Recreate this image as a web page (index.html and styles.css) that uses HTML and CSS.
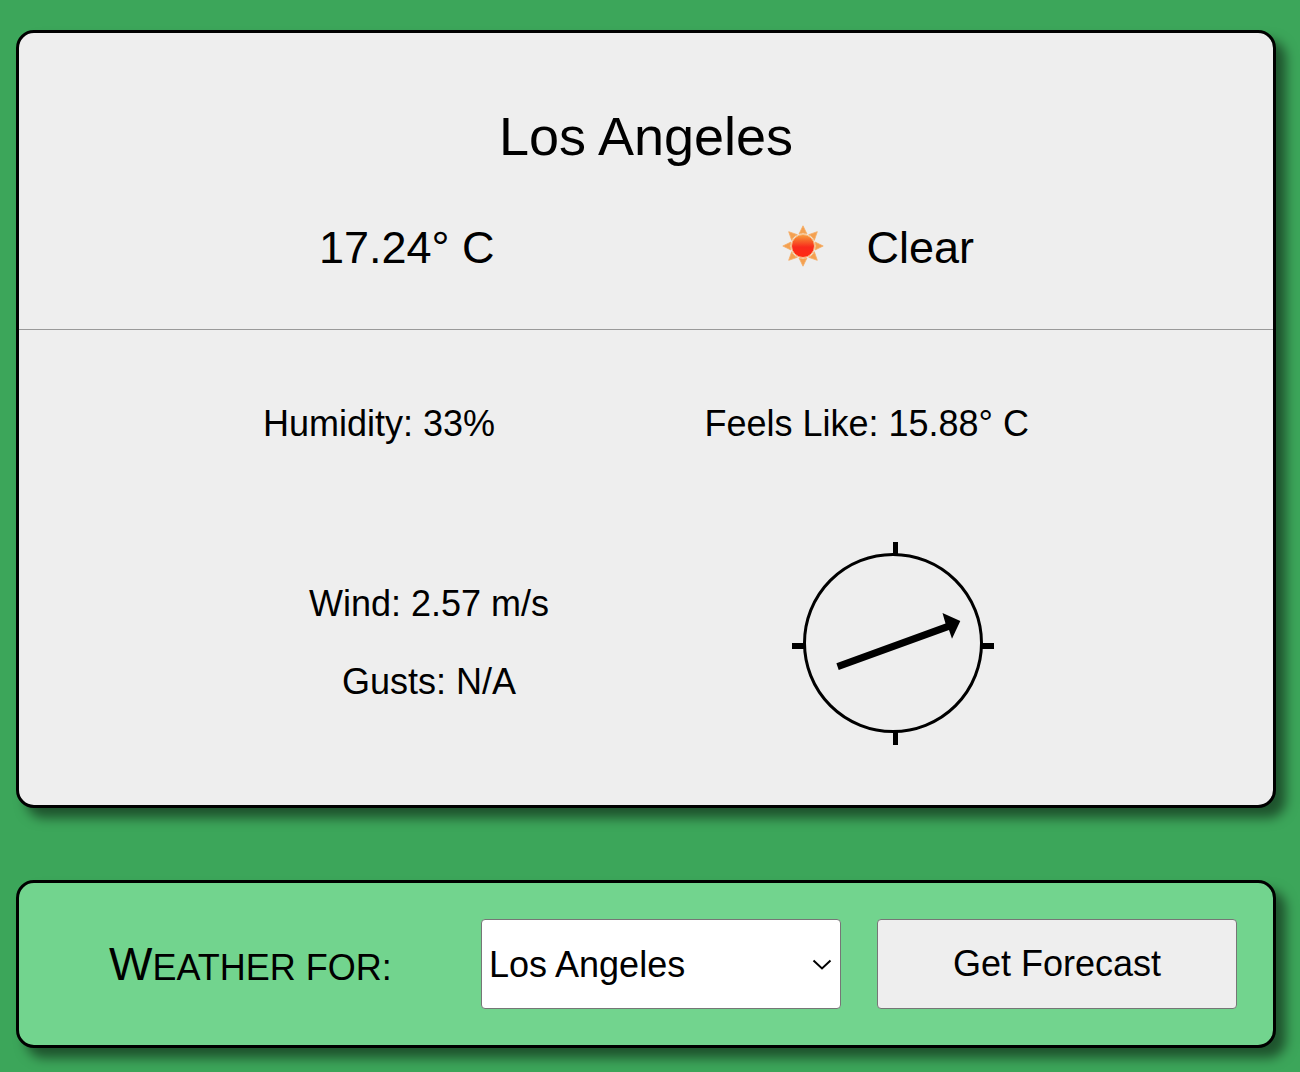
FILE: index.html
```html
<!DOCTYPE html>
<html lang="en">
<head>
<meta charset="utf-8">
<title>Weather</title>
<link rel="stylesheet" href="styles.css">
</head>
<body>
<main class="report panel">
  <section class="summary">
    <h1 class="city">Los Angeles</h1>
    <div class="current">
      <div class="temperature">17.24° C</div>
      <div class="condition">
        <svg class="sun" viewBox="0 0 42 42" aria-hidden="true">
          <defs>
            <linearGradient id="core" x1="0" y1="0" x2="0" y2="1">
              <stop offset="0" stop-color="#f9a040"/>
              <stop offset=".25" stop-color="#f76a2a"/>
              <stop offset=".55" stop-color="#f92a1c"/>
              <stop offset="1" stop-color="#ff2a12"/>
            </linearGradient>
            <path id="ray" d="M21 .8 25 9Q21 7.200 17 9Z"/>
          </defs>
          <g fill="#f4a050" stroke="#f5ae68" stroke-width=".8" stroke-linejoin="round">
            <use href="#ray"/>
            <use href="#ray" transform="rotate(45 21 21)"/>
            <use href="#ray" transform="rotate(90 21 21)"/>
            <use href="#ray" transform="rotate(135 21 21)"/>
            <use href="#ray" transform="rotate(180 21 21)"/>
            <use href="#ray" transform="rotate(225 21 21)"/>
            <use href="#ray" transform="rotate(270 21 21)"/>
            <use href="#ray" transform="rotate(315 21 21)"/>
          </g>
          <circle cx="21" cy="21" r="11.5" fill="url(#core)" stroke="#fbc084" stroke-width="1"/>
        </svg>
        <span>Clear</span>
      </div>
    </div>
  </section>
  <section class="details">
    <div class="air">
      <span>Humidity: 33%</span>
      <span>Feels Like: 15.88° C</span>
    </div>
    <div class="wind">
      <div class="speeds">
        <span>Wind: 2.57 m/s</span>
        <span>Gusts: N/A</span>
      </div>
      <svg class="compass" viewBox="0 0 202 203" aria-hidden="true">
        <circle cx="101" cy="101" r="88.5" fill="none" stroke="#000" stroke-width="3"/>
        <path d="M101 0h5v13h-5zM101 190h5v13h-5zM0 101h13v6H0zM190 101h12v6h-12z"/>
        <path d="M44.400 121.200 153.500 81.500 150.500 71 168.300 79 160 96.800 157 88 46.700 127.900Z"/>
      </svg>
    </div>
  </section>
</main>
<form class="search panel">
  <label class="caption" for="city">Weather for:</label>
  <div class="picker">
    <select id="city" class="control"><option>Los Angeles</option></select>
    <svg class="chevron" viewBox="0 0 20 12" aria-hidden="true"><path d="M1.500 1.500 10 9.500 18.500 1.500" fill="none" stroke="#000" stroke-width="2"/></svg>
  </div>
  <button class="control" type="button">Get Forecast</button>
</form>
</body>
</html>
```
FILE: styles.css
```css
* {
  box-sizing: border-box;
}

body {
  margin: 0;
  height: 1072px;
  padding: 30px 24px 24px 16px;
  display: flex;
  flex-direction: column;
  gap: 72px;
  overflow: hidden;
  background: #3ca65a;
  color: #000;
  font: 36px/40px "Liberation Sans", Arial, sans-serif;
}

.panel {
  border: 3px solid #000;
  border-radius: 18px;
  box-shadow: 10px 10px 12px rgba(0, 0, 0, 0.5);
}

.report {
  height: 778px;
  background: #eee;
}

.summary {
  height: 297px;
  padding-top: 73px;
  border-bottom: 1px solid #999;
}

.city {
  margin: 0 0 56px;
  font-size: 54px;
  font-weight: 400;
  line-height: 60px;
  text-align: center;
}

.current {
  display: flex;
  justify-content: space-between;
  padding: 0 299px 0 300px;
  font-size: 45px;
  line-height: 52px;
}

.condition {
  display: flex;
  gap: 42px;
}

.sun {
  width: 42px;
  height: 42px;
  margin-top: 3px;
}

.details {
  padding: 74px 243px 0;
}

.air {
  display: flex;
  justify-content: space-between;
  padding: 0 1px;
}

.wind {
  display: flex;
  justify-content: space-between;
  margin-top: 98px;
  padding: 0 36px 0 47px;
}

.speeds {
  display: flex;
  flex-direction: column;
  align-items: center;
  gap: 38px;
  padding-top: 42px;
}

.compass {
  width: 202px;
  height: 203px;
}

.search {
  height: 168px;
  padding: 0 36px 0 90px;
  display: flex;
  align-items: center;
  gap: 36px;
  background: #72d48e;
}

.caption {
  flex: 1;
  padding-top: 3px;
  font-size: 36px;
  line-height: 54px;
  text-transform: uppercase;
}

.caption::first-letter {
  font-size: 46px;
}

.picker {
  position: relative;
  width: 360px;
  height: 90px;
}

.control {
  width: 360px;
  height: 90px;
  margin: 0;
  border: 1px solid #767676;
  border-radius: 4px;
  background: #eee;
  color: #000;
  font: inherit;
}

select.control {
  appearance: none;
  padding: 2px 7px 0;
  background: #fff;
}

.chevron {
  position: absolute;
  right: 9px;
  top: 40px;
  width: 20px;
  height: 12px;
  pointer-events: none;
}
```
